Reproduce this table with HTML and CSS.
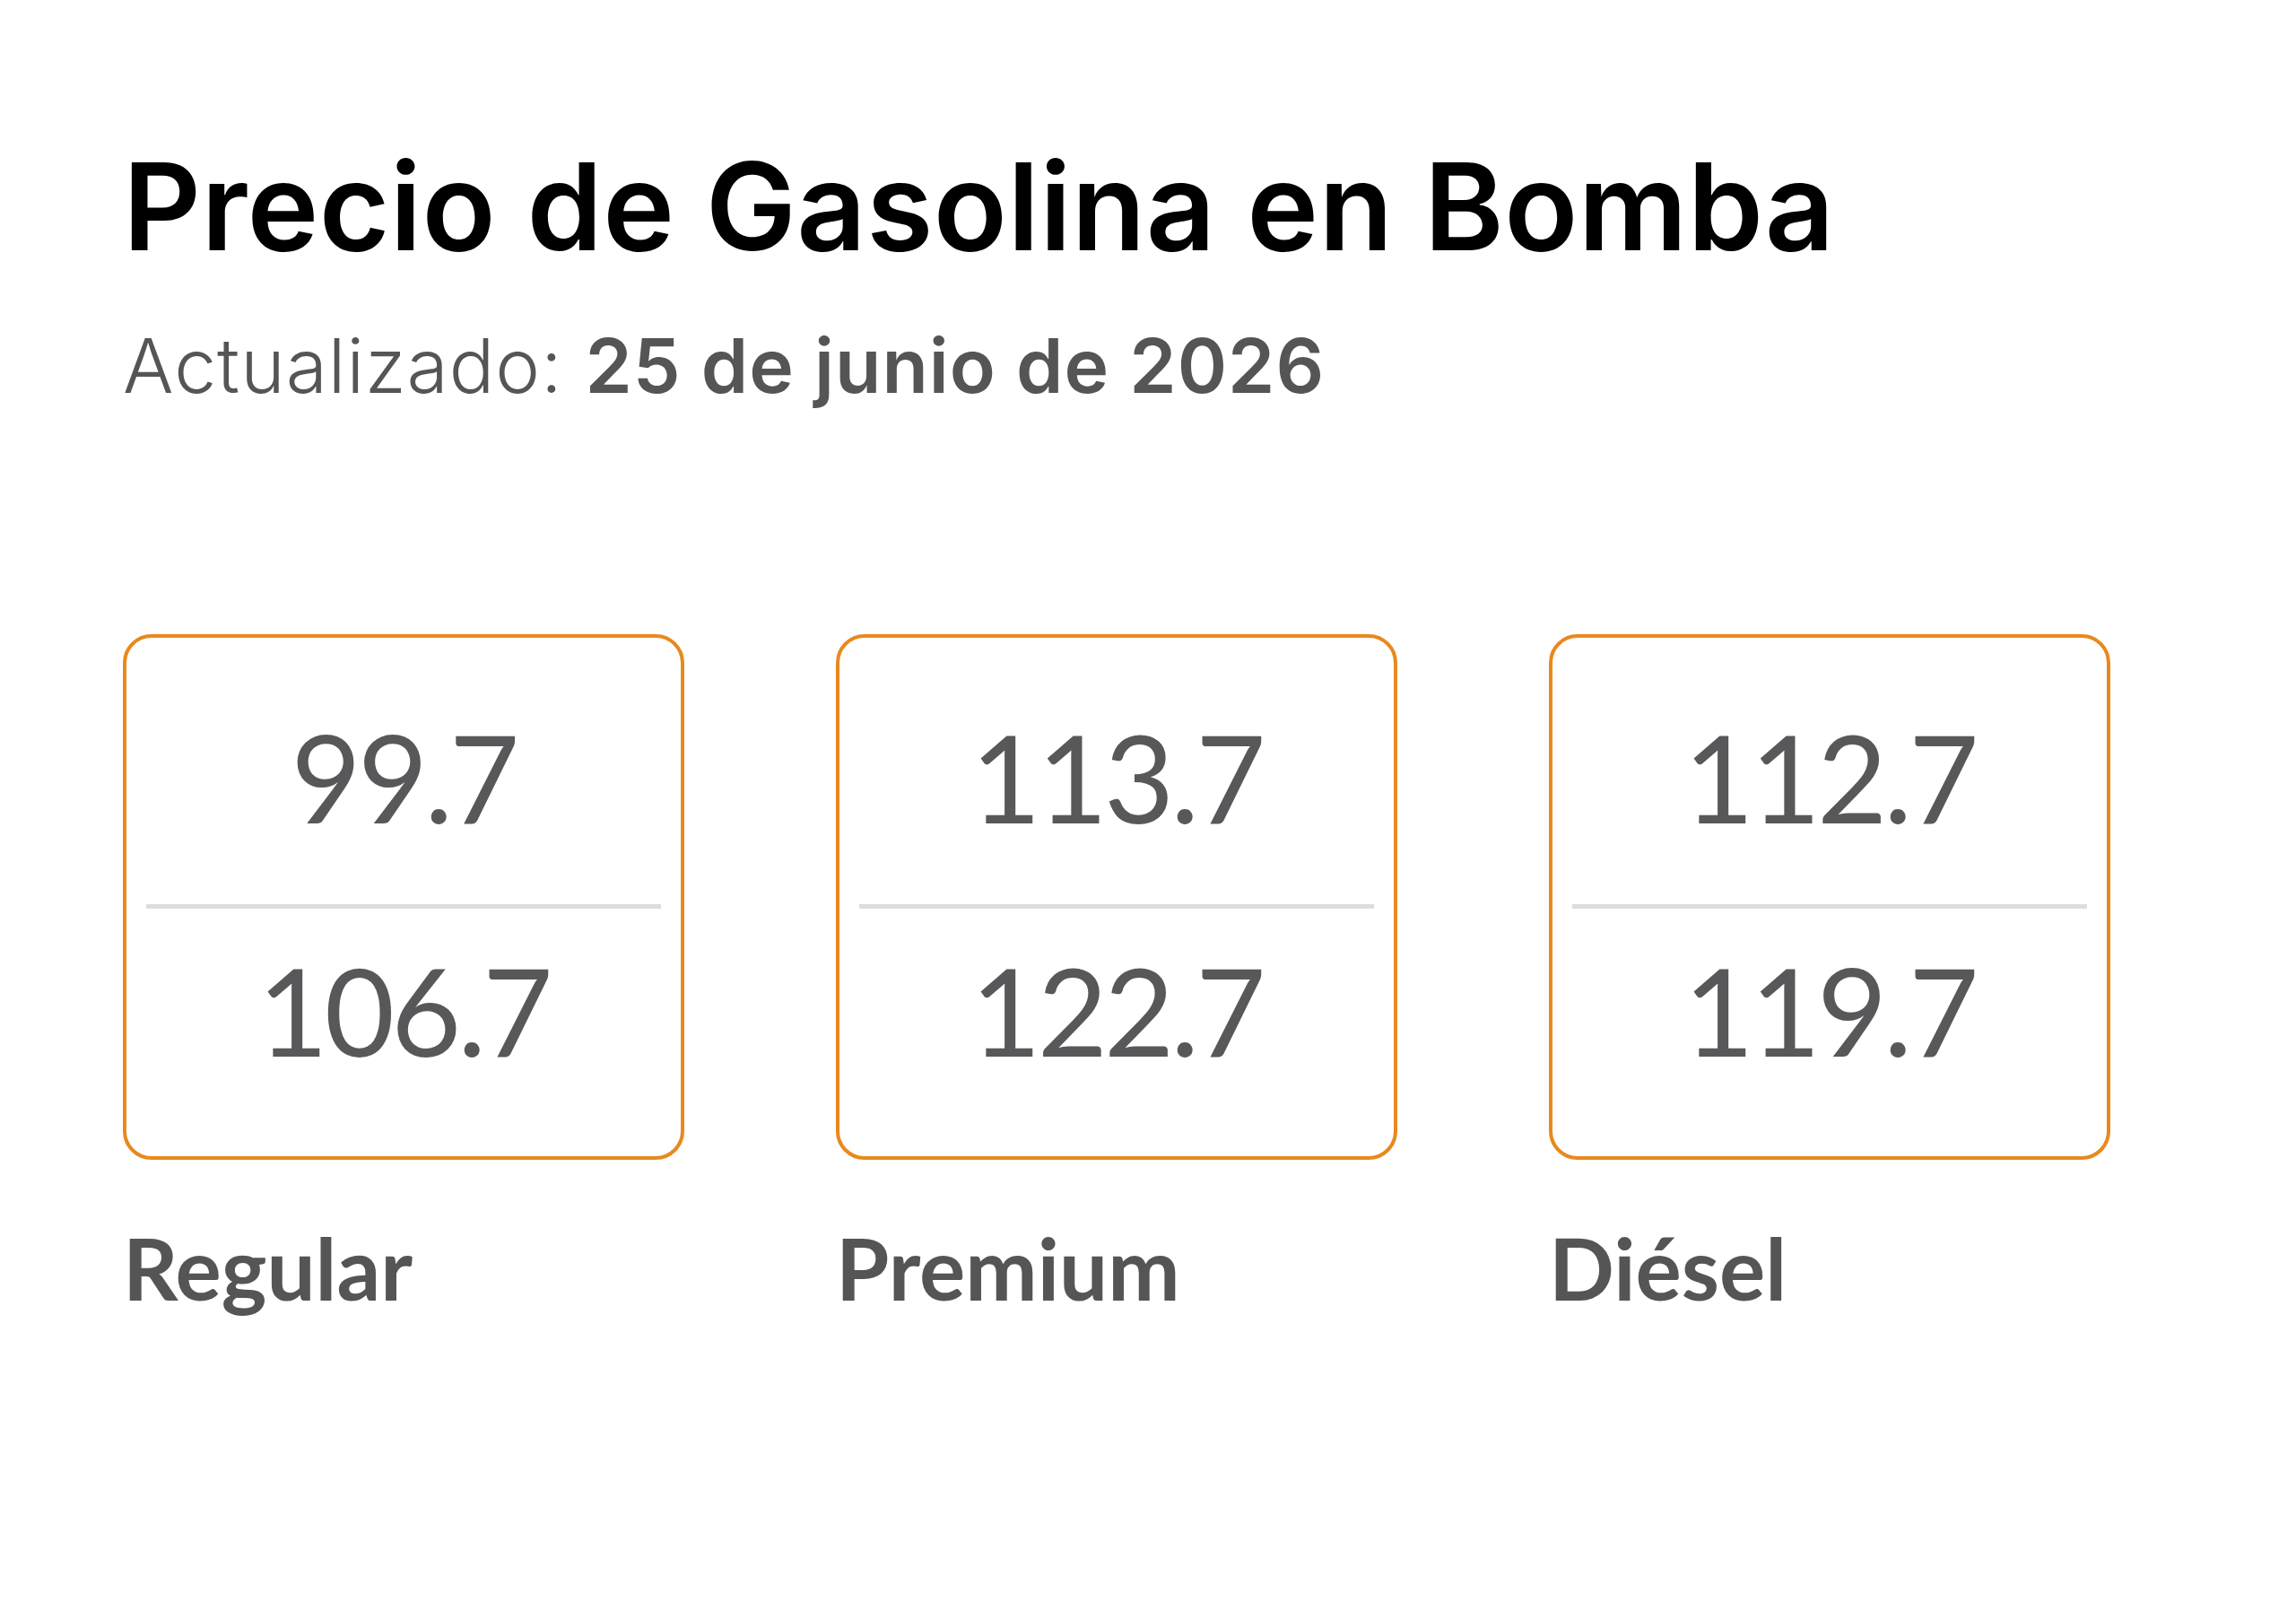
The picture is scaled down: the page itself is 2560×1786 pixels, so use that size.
FILE: index.html
```html
<!DOCTYPE html>
<html lang="es">
<head>
<meta charset="utf-8">
<title>Precio de Gasolina en Bomba</title>
<link rel="stylesheet" href="styles.css">
</head>
<body>
<main class="page">
  <header class="head">
    <h1 class="title">Precio de Gasolina en Bomba</h1>
    <p class="updated">Actualizado: <strong>25 de junio de 2026</strong></p>
  </header>
  <section class="prices">
    <div class="fuel">
      <div class="box">
        <div class="price">99.7</div>
        <div class="divider"></div>
        <div class="price price-low">106.7</div>
      </div>
      <div class="label">Regular</div>
    </div>
    <div class="fuel">
      <div class="box">
        <div class="price">113.7</div>
        <div class="divider"></div>
        <div class="price price-low">122.7</div>
      </div>
      <div class="label">Premium</div>
    </div>
    <div class="fuel">
      <div class="box">
        <div class="price">112.7</div>
        <div class="divider"></div>
        <div class="price price-low">119.7</div>
      </div>
      <div class="label">Diésel</div>
    </div>
  </section>
</main>
</body>
</html>
```

FILE: styles.css
```css
html, body {
  margin: 0;
  padding: 0;
  background: #ffffff;
}

.page {
  padding: 150px 0 0 137px;
}

.head {
  display: flex;
  flex-direction: column;
}

.title {
  margin: 0;
  font-family: Inter, "Open Sans", sans-serif;
  font-weight: 600;
  font-size: 135px;
  line-height: 160px;
  color: #000000;
  letter-spacing: 0.4px;
}

.updated {
  margin: 43px 0 0 0;
  font-family: Inter, "Open Sans", sans-serif;
  font-weight: 300;
  font-size: 84px;
  line-height: 110px;
  letter-spacing: 1px;
  color: #555555;
}

.updated strong {
  font-weight: 600;
}

.prices {
  display: grid;
  grid-template-columns: 626px 626px 626px;
  column-gap: 169px;
  margin-top: 244px;
}

.fuel {
  display: flex;
  flex-direction: column;
}

.box {
  box-sizing: border-box;
  height: 586px;
  border: 4px solid #e8891e;
  border-radius: 32px;
  padding: 74px 22px 82px;
  display: flex;
  flex-direction: column;
}

.price {
  height: 162px;
  line-height: 162px;
  text-align: center;
  font-family: Lato, "Open Sans", sans-serif;
  font-weight: 400;
  font-size: 135px;
  letter-spacing: -4px;
  color: #58585a;
}

.divider {
  height: 5px;
  margin-top: 61px;
  background: #dddddd;
}

.price-low {
  margin-top: 32px;
}

.label {
  margin-top: 65px;
  font-family: Lato, "Open Sans", sans-serif;
  font-weight: 700;
  font-size: 96px;
  line-height: 110px;
  color: #555555;
}
```
